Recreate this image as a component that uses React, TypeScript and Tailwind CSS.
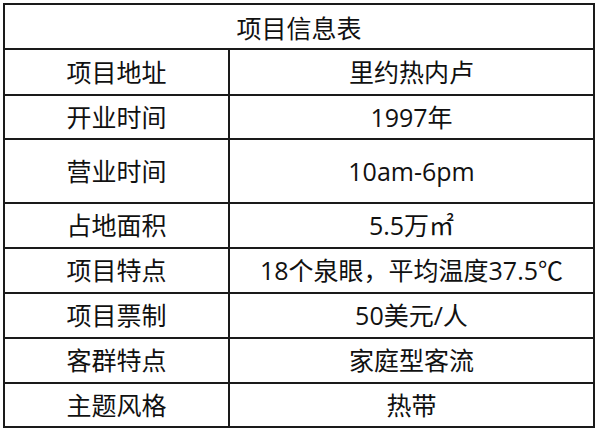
import React from "react";

const rows: [string, string, number][] = [
  ["项目地址", "里约热内卢", 46],
  ["开业时间", "1997年", 44],
  ["营业时间", "10am-6pm", 64],
  ["占地面积", "5.5万㎡", 45],
  ["项目特点", "18个泉眼，平均温度37.5℃", 45],
  ["项目票制", "50美元/人", 45],
  ["客群特点", "家庭型客流", 45],
  ["主题风格", "热带", 44],
];

export default function App() {
  return (
    <div
      className="w-[600px] h-[434px] bg-white pl-[3px] pt-[3px]"
      style={{ fontFamily: '"Open Sans", "Noto Sans CJK SC", sans-serif' }}
    >
      <table className="border-collapse w-[592px] text-[#111] text-[25px] leading-none">
        <tbody>
          <tr className="h-[45px]">
            <td colSpan={2} className="border-2 border-[#1a1a1a] text-center align-middle pt-[4px]">
              项目信息表
            </td>
          </tr>
          {rows.map(([k, v, h]) => (
            <tr key={k} style={{ height: h }}>
              <td className="w-[225px] border-2 border-[#1a1a1a] text-center align-middle p-0">{k}</td>
              <td className="border-2 border-[#1a1a1a] text-center align-middle p-0">{v}</td>
            </tr>
          ))}
        </tbody>
      </table>
    </div>
  );
}
